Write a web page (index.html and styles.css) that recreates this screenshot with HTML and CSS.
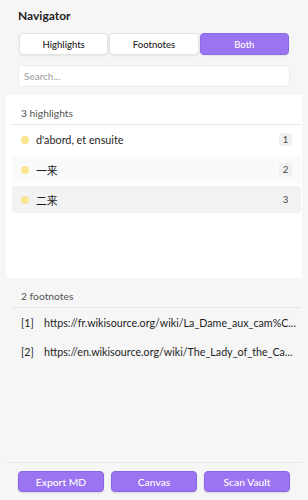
FILE: index.html
```html
<!DOCTYPE html>
<html>
<head>
<meta charset="utf-8">
<link rel="stylesheet" href="styles.css">
</head>
<body>
<div class="app">
  <div class="top">
    <div class="title">Navigator</div>
    <div class="seg">
      <button class="seg-btn">Highlights</button>
      <button class="seg-btn">Footnotes</button>
      <button class="seg-btn active">Both</button>
    </div>
    <div class="search">Search...</div>
  </div>
  <div class="panel">
    <div class="sec-head">3 highlights</div>
    <div class="list">
      <div class="row"><span class="dot"></span><span class="txt">d'abord, et ensuite</span><span class="badge">1</span></div>
      <div class="row soft"><span class="dot"></span><span class="txt">一来</span><span class="badge">2</span></div>
      <div class="row hover"><span class="dot"></span><span class="txt">二来</span><span class="badge">3</span></div>
    </div>
  </div>
  <div class="foot-sec">
    <div class="sec-head">2 footnotes</div>
    <div class="fn"><span class="fn-num">[1]</span><span class="fn-url">https://fr.wikisource.org/wiki/La_Dame_aux_cam%C...</span></div>
    <div class="fn"><span class="fn-num">[2]</span><span class="fn-url">https://en.wikisource.org/wiki/The_Lady_of_the_Ca...</span></div>
  </div>
  <div class="spacer"></div>
  <div class="bottom">
    <button class="act">Export MD</button>
    <button class="act">Canvas</button>
    <button class="act">Scan Vault</button>
  </div>
</div>
</body>
</html>
```
FILE: styles.css
```css
* { box-sizing: border-box; }
html, body { margin: 0; padding: 0; }
body {
  background: #f6f6f6;
  font-family: Lato, "Noto Sans CJK SC", sans-serif;
  color: #222;
}
.app {
  height: 500px;
  display: flex;
  flex-direction: column;
  padding: 0 6px;
}
.top { padding: 0 12px; }
.title {
  font-size: 12px;
  font-weight: 700;
  line-height: 18px;
  margin-top: 7px;
  color: #1e1e1e;
}
.seg {
  display: flex;
  gap: 1px;
  margin-top: 8px;
  padding: 0 1px;
}
.seg-btn {
  flex: 1;
  height: 22px;
  font-family: inherit;
  font-size: 9.5px;
  font-weight: 500;
  color: #222;
  background: #fff;
  border: 1px solid #e3e3e3;
  border-radius: 4px;
  box-shadow: 0 1px 2px rgba(0,0,0,0.08);
  padding: 0;
}
.seg-btn.active {
  background: #9b74f2;
  border-color: #8e68ea;
  color: #fff;
}
.search {
  margin-top: 10px;
  height: 22px;
  background: #fff;
  border: 1px solid #ececec;
  border-radius: 4px;
  font-size: 10px;
  line-height: 20px;
  color: #9a9a9a;
  padding-left: 5px;
}
.panel {
  margin-top: 8px;
  background: #fff;
  height: 183px;
  padding: 0 1px 0 6px;
}
.sec-head {
  font-size: 10.3px;
  line-height: 16px;
  color: #555;
  padding: 10px 0 3px 9px;
  border-bottom: 1px solid #e6e6e6;
}
.list { padding-top: 1px; }
.row {
  height: 27px;
  margin-bottom: 3px;
  display: flex;
  align-items: center;
  padding: 0 9px;
  border-radius: 3px;
}
.row.soft { background: #fafafa; }
.row.hover { background: #f2f2f2; }
.dot {
  width: 8px;
  height: 8px;
  border-radius: 50%;
  background: #fbe48f;
  flex: none;
}
.txt {
  margin-left: 7px;
  font-size: 10.8px;
  flex: 1;
  color: #1e1e1e;
}
.badge {
  font-size: 9.5px;
  color: #444;
  border-radius: 3px;
  min-width: 13px;
  height: 13px;
  line-height: 13px;
  text-align: center;
  background: #f1f1f1;
}
.row.hover .badge { background: transparent; }
.foot-sec { padding: 0 1px 0 6px; }
.fn {
  height: 29px;
  display: flex;
  align-items: center;
  padding-left: 9px;
  font-size: 10.7px;
  color: #1e1e1e;
}
.fn:first-of-type { margin-top: 1px; }
.fn-num { width: 23px; flex: none; }
.fn-url { white-space: nowrap; overflow: hidden; }
.spacer { flex: 1; }
.bottom {
  border-top: 1px solid #e6e6e6;
  padding: 8px 12px 8px 12px;
  display: flex;
  gap: 7px;
}
.act {
  flex: 1;
  height: 21px;
  font-family: inherit;
  font-size: 10.3px;
  font-weight: 500;
  color: #fff;
  background: #9b74f2;
  border: 1px solid #8a66e6;
  border-radius: 4px;
  box-shadow: 0 1px 2px rgba(0,0,0,0.12);
  padding: 0;
}
```
